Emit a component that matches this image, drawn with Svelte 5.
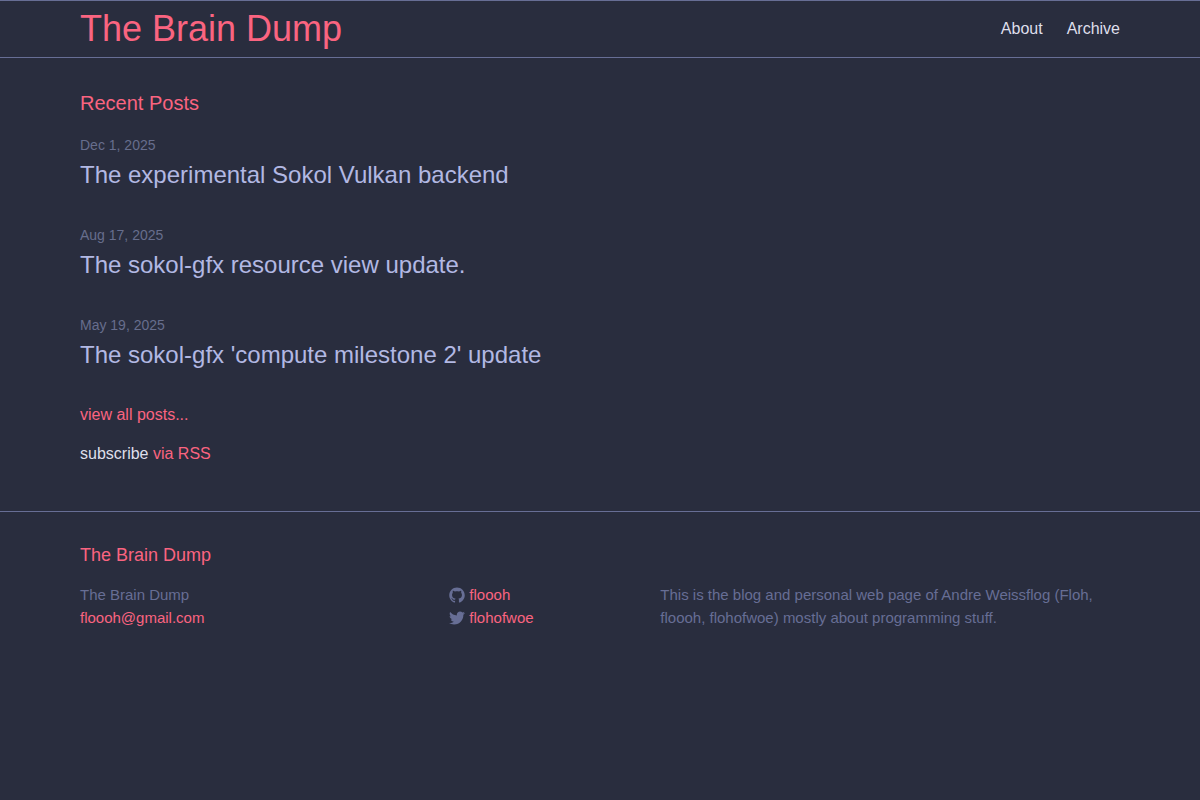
<script lang="ts">
	type Post = { date: string, title: string, url: string }

	const title = 'The Brain Dump'
	const email = 'floooh@gmail.com'

	const posts: Post[] = [
		{ date: 'Dec 1, 2025', title: 'The experimental Sokol Vulkan backend', url: '#vulkan' },
		{ date: 'Aug 17, 2025', title: 'The sokol-gfx resource view update.', url: '#views' },
		{ date: 'May 19, 2025', title: "The sokol-gfx 'compute milestone 2' update", url: '#compute' },
	]
</script>

<header>
	<div class="wrapper bar">
		<a class="site-title" href="#home">{title}</a>
		<nav>
			<a href="#about">About</a>
			<a href="#archive">Archive</a>
		</nav>
	</div>
</header>

<main>
	<div class="wrapper">
		<h1>Recent Posts</h1>
		<ul class="post-list">
			{#each posts as post}
				<li>
					<span class="post-meta">{post.date}</span>
					<h2><a href={post.url}>{post.title}</a></h2>
				</li>
			{/each}
		</ul>
		<p><a href="#archive">view all posts...</a></p>
		<p>subscribe <a href="#rss">via RSS</a></p>
	</div>
</main>

<footer>
	<div class="wrapper">
		<h2 class="footer-heading">{title}</h2>
		<div class="footer-cols">
			<ul class="col-1">
				<li>{title}</li>
				<li><a href="mailto:{email}">{email}</a></li>
			</ul>
			<ul class="col-2">
				<li>
					<a href="#github">
						<svg viewBox="0 0 16 16" aria-hidden="true"><path d="M7.999,0.431c-4.285,0-7.76,3.474-7.76,7.761 c0,3.428,2.223,6.337,5.307,7.363c0.388,0.071,0.53-0.168,0.53-0.374c0-0.184-0.007-0.672-0.01-1.32 c-2.159,0.469-2.614-1.04-2.614-1.04c-0.353-0.896-0.862-1.135-0.862-1.135c-0.705-0.481,0.053-0.472,0.053-0.472 c0.779,0.055,1.189,0.8,1.189,0.8c0.692,1.186,1.816,0.843,2.258,0.645c0.071-0.502,0.271-0.843,0.493-1.037 C4.86,11.425,3.049,10.76,3.049,7.786c0-0.847,0.302-1.54,0.799-2.082C3.768,5.507,3.501,4.718,3.924,3.65 c0,0,0.652-0.209,2.134,0.796C6.677,4.273,7.34,4.187,8,4.184c0.659,0.003,1.323,0.089,1.943,0.261 c1.482-1.004,2.132-0.796,2.132-0.796c0.423,1.068,0.157,1.857,0.077,2.054c0.497,0.542,0.798,1.235,0.798,2.082 c0,2.981-1.814,3.637-3.543,3.829c0.279,0.24,0.527,0.713,0.527,1.437c0,1.037-0.01,1.874-0.01,2.129 c0,0.208,0.14,0.449,0.534,0.373c3.081-1.028,5.302-3.935,5.302-7.362C15.76,3.906,12.285,0.431,7.999,0.431z"/></svg>
						<span>floooh</span>
					</a>
				</li>
				<li>
					<a href="#twitter">
						<svg viewBox="0 0 16 16" aria-hidden="true"><path d="M15.969,3.058c-0.586,0.26-1.217,0.436-1.878,0.515c0.675-0.405,1.194-1.045,1.438-1.809c-0.632,0.375-1.332,0.647-2.076,0.793c-0.596-0.636-1.446-1.033-2.387-1.033c-1.806,0-3.27,1.464-3.27,3.27 c0,0.256,0.029,0.506,0.085,0.745C5.163,5.404,2.753,4.102,1.14,2.124C0.859,2.607,0.698,3.168,0.698,3.767 c0,1.134,0.577,2.135,1.455,2.722C1.616,6.472,1.112,6.325,0.671,6.08c0,0.014,0,0.027,0,0.041c0,1.584,1.127,2.906,2.623,3.206 C3.02,9.402,2.731,9.442,2.433,9.442c-0.211,0-0.416-0.021-0.615-0.059c0.416,1.299,1.624,2.245,3.055,2.271 c-1.119,0.877-2.529,1.4-4.061,1.4c-0.264,0-0.524-0.015-0.78-0.046c1.447,0.928,3.166,1.469,5.013,1.469 c6.015,0,9.304-4.983,9.304-9.304c0-0.142-0.003-0.283-0.009-0.423C14.976,4.29,15.531,3.714,15.969,3.058z"/></svg>
						<span>flohofwoe</span>
					</a>
				</li>
			</ul>
			<p class="col-3">This is the blog and personal web page of Andre Weissflog (Floh, floooh, flohofwoe) mostly about programming stuff.</p>
		</div>
	</div>
</footer>

<style>
	:global(body) {
		margin: 0;
		background: #292d3e;
		color: #dfdfeb;
		font: 16px/24px "Liberation Sans", Arial, sans-serif;
	}

	h1, h2, p, ul {
		margin: 0;
		padding: 0;
		font-weight: 400;
	}

	ul {
		list-style: none;
	}

	a {
		color: #fa6480;
		text-decoration: none;
	}
	a:hover {
		text-decoration: underline;
	}

	.wrapper {
		max-width: 1040px;
		margin: 0 auto;
		padding: 0 30px;
	}

	header {
		border-top: 1px solid #676e95;
		border-bottom: 1px solid #676e95;
	}
	.bar {
		display: flex;
		justify-content: space-between;
		align-items: center;
	}
	.site-title {
		font-size: 36px;
		line-height: 56px;
	}
	nav {
		display: flex;
		gap: 24px;
	}
	nav a {
		color: #dfdfeb;
	}

	main {
		padding: 30px 0;
	}
	h1 {
		margin-bottom: 15px;
		color: #fa6480;
		font-size: 20px;
		line-height: 30px;
	}
	.post-list li {
		margin-bottom: 30px;
	}
	.post-meta {
		display: block;
		color: #676e8d;
		font-size: 14px;
		line-height: 24px;
	}
	.post-list h2 {
		font-size: 24px;
		line-height: 36px;
	}
	.post-list a {
		color: #b2b8e3;
	}
	main p {
		margin-bottom: 15px;
	}

	footer {
		padding: 30px 0;
		border-top: 1px solid #676e95;
		color: #676e95;
		font-size: 15px;
		line-height: 23px;
	}
	.footer-heading {
		margin-bottom: 14px;
		color: #fa6480;
		font-size: 18px;
		line-height: 27px;
	}
	.footer-cols {
		display: flex;
	}
	.col-1 {
		width: 35.5%;
	}
	.col-2 {
		width: 20.3%;
	}
	.col-3 {
		flex: 1;
	}
	svg {
		width: 16px;
		height: 16px;
		vertical-align: text-bottom;
		fill: #676e95;
	}
</style>
